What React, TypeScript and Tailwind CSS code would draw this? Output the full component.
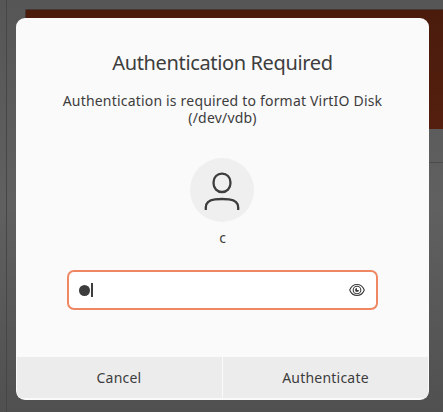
function UserIcon() {
  return (
    <svg width="64" height="64" viewBox="0 0 64 64" fill="none" stroke="#3d3d3d" strokeWidth="2.300">
      <rect x="23.600" y="15.600" width="16.800" height="18.400" rx="8.200" />
      <path d="M15.800 52v-2.400c0-5.200 3.600-7.600 9.200-8.200 4.600-.5 9.400-.5 14 0 5.600.6 9.200 3 9.200 8.200V52" />
    </svg>
  );
}

function EyeIcon() {
  return (
    <svg width="16" height="14" viewBox="0 0 16 14" fill="none" stroke="#3d3d3d">
      <path d="M.7 7C2.200 3.300 4.700 1.500 8 1.500S13.800 3.300 15.300 7C13.800 10.700 11.300 12.500 8 12.500S2.200 10.700.7 7Z" strokeWidth="1.100" />
      <circle cx="8" cy="7" r="3.800" strokeWidth="1.100" />
      <path d="M8 5a2 2 0 1 0 2 2H8Z" fill="#3d3d3d" stroke="none" />
    </svg>
  );
}

export default function App() {
  return (
    <div className="relative h-[412px] w-[443px] overflow-hidden bg-linear-to-b from-[#565656] via-[#606060] to-[#505050] font-['Noto_Sans',sans-serif] text-[#3d3d3d]">
      <div className="absolute inset-y-0 left-[6px] w-px bg-[#464646]" />
      <div className="absolute top-[9px] left-[25px] h-[120px] w-[418px] rounded-tl-[2px] border-t border-l border-[#433632] bg-linear-to-b from-[#4a1b0b] to-[#541f0e]" />
      <div className="absolute top-[162px] right-0 h-px w-[20px] bg-[#4b4b4b]" />
      <main className="absolute top-[18px] left-[16px] flex h-[382px] w-[413px] flex-col overflow-hidden rounded-[9px] bg-[#fafafa] px-px pb-[2px]">
        <div className="flex flex-1 flex-col items-center">
          <h1 className="mt-[31px] text-[20px] leading-[28px] tracking-[-0.36px] whitespace-nowrap">Authentication Required</h1>
          <p className="mt-[15px] text-center text-[14px] leading-[17px] tracking-[0.19px] whitespace-nowrap">
            Authentication is required to format VirtIO Disk<br />(/dev/vdb)
          </p>
          <div className="mt-[32px] mr-[2px] size-16 shrink-0 rounded-full bg-[#efefef]"><UserIcon /></div>
          <div className="mt-[6px] text-[14px] leading-[20px]">c</div>
          <div className="mt-[22px] flex h-10 w-[311px] items-center rounded-[7px] border-2 border-[#f08763] bg-white pr-[11px] pl-[10px]">
            <span className="size-[11px] rounded-full bg-[#3d3d3d]" />
            <span className="ml-px h-[14px] w-[2px] bg-[#3d3d3d]" />
            <span className="ml-auto"><EyeIcon /></span>
          </div>
        </div>
        <div className="grid h-[41px] grid-cols-2 gap-px text-[14px] tracking-[0.22px]">
          <button className="bg-[#ececec] pr-px">Cancel</button>
          <button className="bg-[#ececec]">Authenticate</button>
        </div>
      </main>
    </div>
  );
}
